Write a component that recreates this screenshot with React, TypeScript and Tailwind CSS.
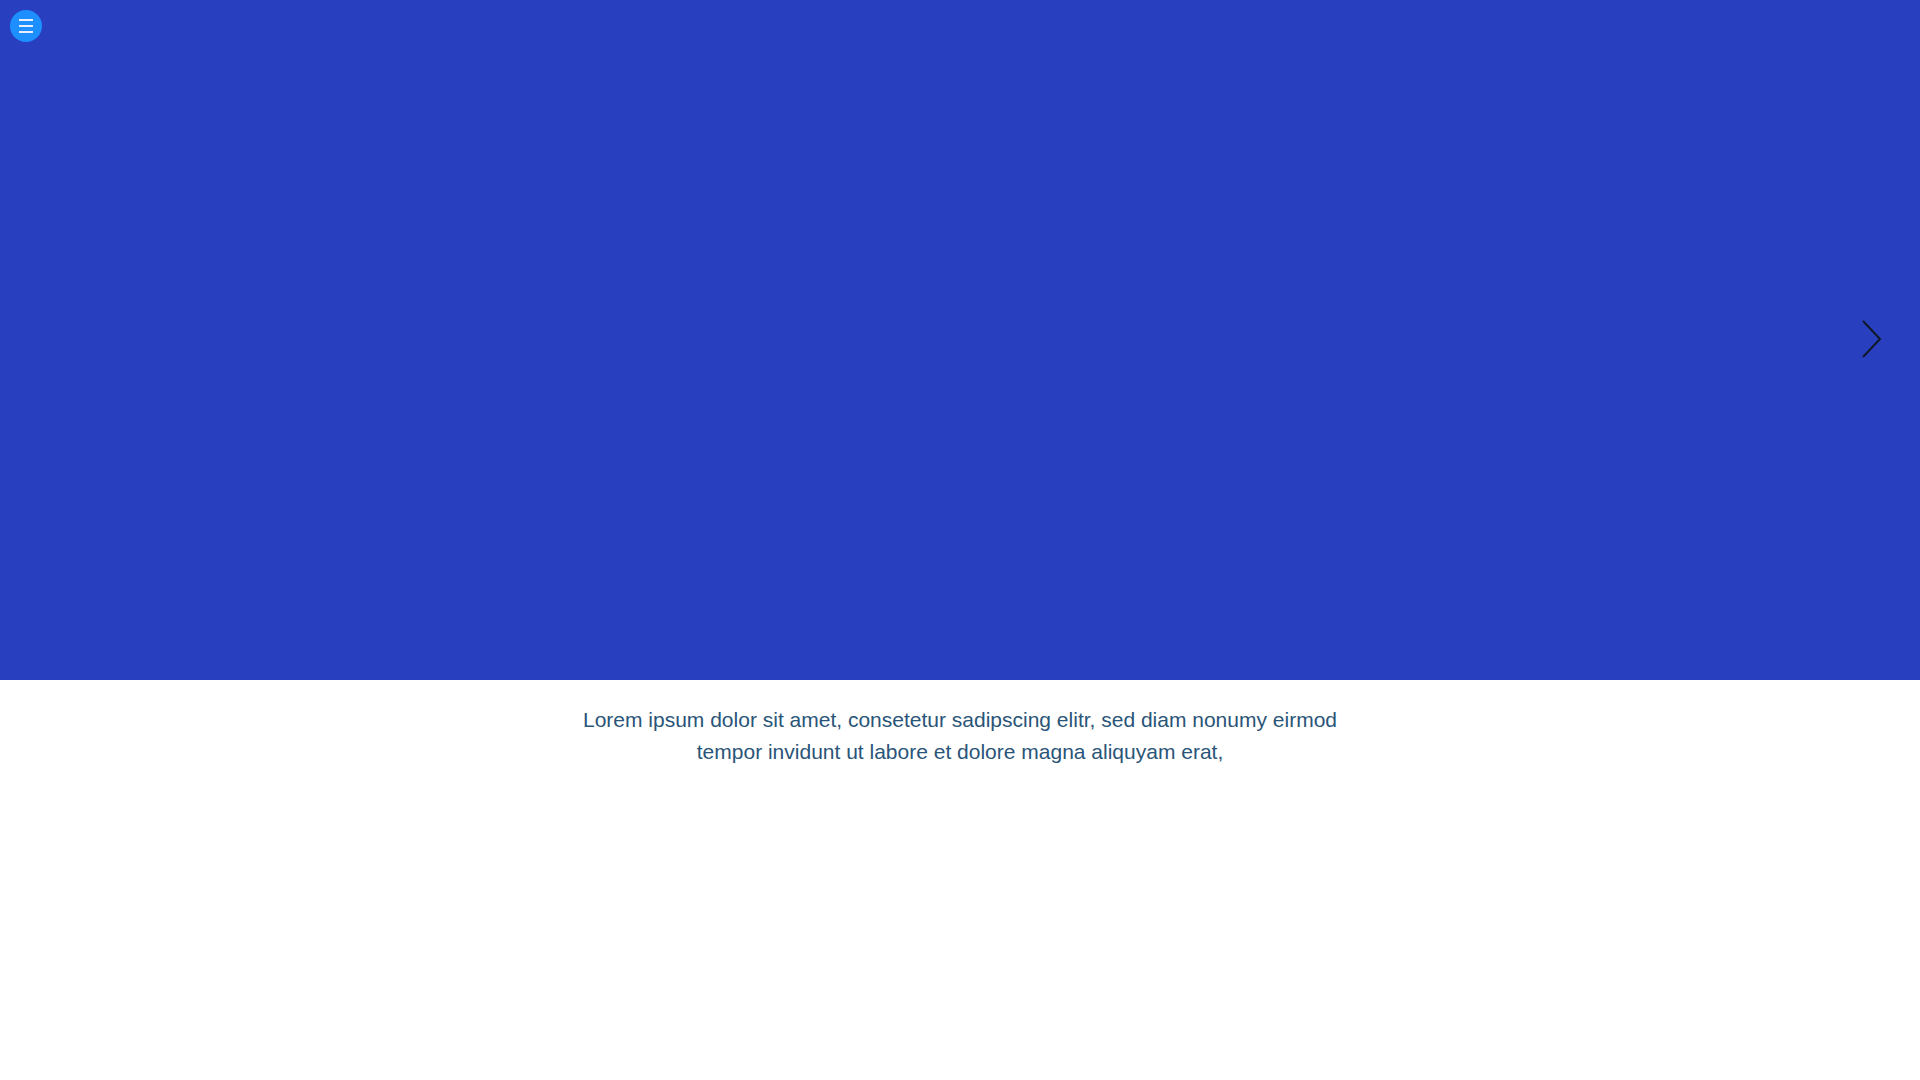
export default function App() {
  return (
    <div className="min-h-screen w-full bg-white" style={{ fontFamily: '"Liberation Sans", Arial, sans-serif' }}>
      <section className="relative h-[680px] w-full bg-[#2840bf]">
        <button className="absolute left-[10px] top-[10px] flex h-[32px] w-[32px] items-center justify-center rounded-full bg-[#1e8fff]">
          <span className="flex w-[14px] flex-col gap-[4px]">
            <span className="block h-[2px] w-full bg-[#e6eeff]" />
            <span className="block h-[2px] w-full bg-[#e6eeff]" />
            <span className="block h-[2px] w-full bg-[#e6eeff]" />
          </span>
        </button>
        <button className="absolute right-[38px] top-[318px]">
          <svg width="22" height="42" viewBox="0 0 22 42" fill="none">
            <path d="M3 3 L20 21 L3 39" stroke="#111827" strokeWidth="2" />
          </svg>
        </button>
      </section>
      <p className="mx-auto w-[800px] pt-[24px] text-center text-[21px] leading-[32px] text-[#2a5578]">
        Lorem ipsum dolor sit amet, consetetur sadipscing elitr, sed diam nonumy eirmod tempor invidunt ut labore et dolore magna aliquyam erat,
      </p>
    </div>
  );
}
